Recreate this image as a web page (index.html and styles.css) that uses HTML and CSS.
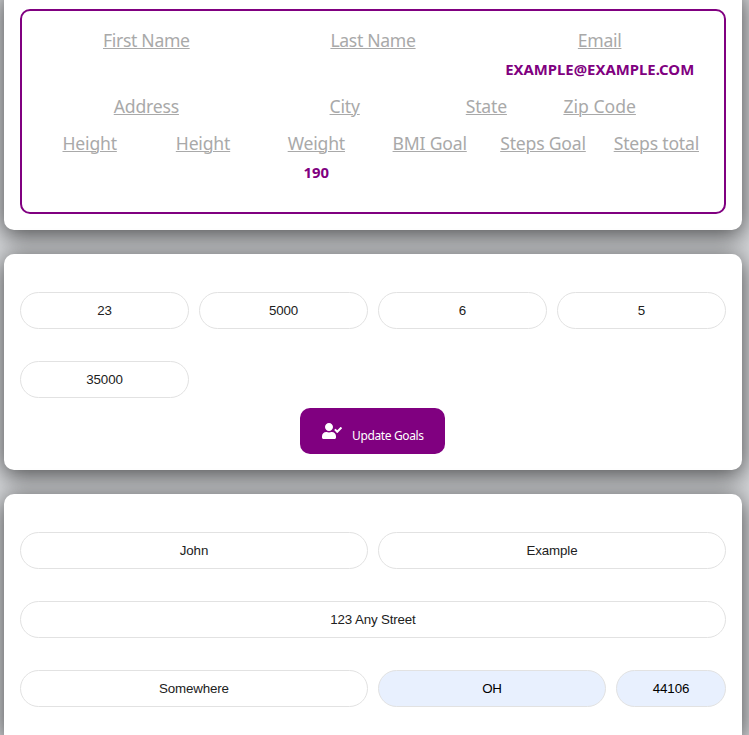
FILE: index.html
```html
<!DOCTYPE html>
<html lang="en">
<head>
<meta charset="utf-8">
<title>Profile goals</title>
<link rel="stylesheet" href="styles.css">
</head>
<body>
<main class="page">
  <section class="card card-summary">
    <div class="summary">
      <div class="field span-4"><span class="label wide">First Name</span></div>
      <div class="field span-4"><span class="label wide">Last Name</span></div>
      <div class="field span-4"><span class="label wide">Email</span><strong class="value">EXAMPLE@EXAMPLE.COM</strong></div>
      <div class="field span-4"><span class="label">Address</span></div>
      <div class="field span-3"><span class="label">City</span></div>
      <div class="field span-2"><span class="label">State</span></div>
      <div class="field span-2"><span class="label zip">Zip Code</span></div>
      <div class="field span-2 new-row"><span class="label">Height</span></div>
      <div class="field span-2"><span class="label">Height</span></div>
      <div class="field span-2"><span class="label">Weight</span><strong class="value">190</strong></div>
      <div class="field span-2"><span class="label">BMI Goal</span></div>
      <div class="field span-2"><span class="label">Steps Goal</span></div>
      <div class="field span-2"><span class="label">Steps total</span></div>
    </div>
  </section>
  <form class="card card-goals">
    <div class="goals">
      <input type="text" value="23" aria-label="BMI goal">
      <input type="text" value="5000" aria-label="Steps goal">
      <input type="text" value="6" aria-label="Height in feet">
      <input type="text" value="5" aria-label="Height in inches">
      <input type="text" value="35000" aria-label="Steps total">
    </div>
    <button class="update" type="button">
      <svg class="icon" viewBox="0 0 640 512" aria-hidden="true"><path fill="currentColor" d="M224 256c70.700 0 128-57.300 128-128S294.700 0 224 0 96 57.300 96 128s57.300 128 128 128zm89.600 32h-16.700c-22.200 10.200-46.900 16-72.900 16s-50.600-5.800-72.900-16h-16.700C60.200 288 0 348.200 0 422.400V464c0 26.500 21.500 48 48 48h352c26.500 0 48-21.500 48-48v-41.600c0-74.200-60.200-134.400-134.400-134.400zm323-128.400l-27.800-28.100c-4.600-4.700-12.100-4.700-16.800-.1l-104.800 104-45.500-45.800c-4.600-4.700-12.100-4.700-16.800-.1l-28.100 27.900c-4.700 4.600-4.700 12.100-.1 16.800l81.700 82.300c4.600 4.700 12.100 4.700 16.800.1l141.300-140.200c4.600-4.700 4.700-12.200.1-16.800z"/></svg>
      <span class="update-text">Update Goals</span>
    </button>
  </form>
  <form class="card card-details">
    <div class="row row-name">
      <input type="text" value="John" aria-label="First name">
      <input type="text" value="Example" aria-label="Last name">
    </div>
    <div class="row"><input type="text" value="123 Any Street" aria-label="Address"></div>
    <div class="row row-place">
      <input type="text" value="Somewhere" aria-label="City">
      <input class="filled" type="text" value="OH" aria-label="State">
      <input class="filled" type="text" value="44106" aria-label="Zip code">
    </div>
  </form>
</main>
</body>
</html>
```
FILE: styles.css
```css
* { box-sizing: border-box; }
html { overflow: hidden; }
body {
  margin: 0;
  height: 735px;
  overflow: hidden;
  background: #d9dbde;
  font-family: "Noto Sans", sans-serif;
}
.page {
  display: flex;
  flex-direction: column;
  gap: 24px;
  height: 735px;
  padding: 0 7px 0 4px;
}
.card {
  flex: none;
  padding: 38px 16px 16px;
  border-radius: 10px;
  background: #fff;
  box-shadow: 0 5px 24px 2px rgba(0, 0, 0, .63);
}
.card-summary { height: 240px; margin-top: -10px; padding-top: 19px; }
.summary {
  display: grid;
  grid-template-columns: repeat(12, 1fr);
  grid-template-rows: 66px 37px 60px;
  height: 205px;
  padding: 17px 11px 0;
  border: 2px solid purple;
  border-radius: 10px;
}
.field { display: flex; flex-direction: column; align-items: center; white-space: nowrap; }
.span-2 { grid-column: span 2; }
.span-3 { grid-column: span 3; }
.span-4 { grid-column: span 4; }
.new-row { grid-column: 1 / span 2; }
.label {
  color: #a9a9a9;
  font-size: 17.6px;
  line-height: 24px;
  letter-spacing: -.2px;
  text-decoration: underline;
  text-decoration-thickness: 1px;
  text-underline-offset: 1px;
}
.wide { letter-spacing: -.32px; }
.zip { letter-spacing: 0; }
.value { margin-top: 7px; color: purple; font-size: 14.9px; line-height: 20px; }
input {
  display: block;
  width: 100%;
  min-width: 0;
  height: 37px;
  padding: 0 10px;
  border: 1px solid #e2e2e2;
  border-radius: 19px;
  background: #fff;
  color: #212121;
  font: 13.333px "Liberation Sans", Arial, sans-serif;
  letter-spacing: -.15px;
  text-align: center;
}
.filled { background: #e8f0fe; color: #000; }
.card-goals { height: 216px; }
.goals { display: grid; grid-template-columns: repeat(4, 1fr); gap: 32px 10px; }
.update {
  display: flex;
  align-items: center;
  width: 145px;
  height: 46px;
  margin: 10px 0 0 280px;
  padding: 0 0 0 22px;
  border: 0;
  border-radius: 10px;
  background: purple;
  color: #fff;
}
.icon { width: 20px; height: 16px; }
.update-text {
  margin: 10px 0 0 10px;
  font: 12px/18px "Noto Sans", sans-serif;
  letter-spacing: -.37px;
  white-space: nowrap;
}
.card-details {
  display: flex;
  flex: 1;
  flex-direction: column;
  gap: 32px;
  padding-bottom: 0;
  border-radius: 10px 10px 0 0;
}
.row { display: grid; gap: 10px; }
.row-name { grid-template-columns: 1fr 1fr; }
.row-place { grid-template-columns: 348px 228px 110px; }
```
